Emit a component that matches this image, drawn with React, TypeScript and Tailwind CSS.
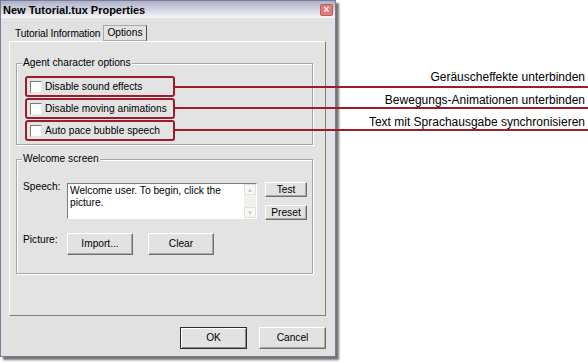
import React from "react";

const btn =
  "flex items-center justify-center bg-[#e2e2e2] border border-t-white border-l-white border-r-[#6f6f6f] border-b-[#6f6f6f] shadow-[inset_-1px_-1px_0_#a8a8a8]";

function Check({ label }: { label: string }) {
  return (
    <div className="flex h-[21px] w-[150px] items-center rounded-[3px] border-2 border-[#9b1c2c] pl-[3px]">
      <span className="h-[12px] w-[12px] border border-t-[#7c7c7c] border-l-[#7c7c7c] border-r-[#e8e8e8] border-b-[#e8e8e8] bg-white" />
      <span className="ml-[3px] leading-[12px]">{label}</span>
    </div>
  );
}

function Group({ title, children, className = "" }: { title: string; children: React.ReactNode; className?: string }) {
  return (
    <div className={`w-[297px] border border-[#a7a7a7] shadow-[inset_1px_1px_0_#fff,1px_1px_0_#fff] ${className}`}>
      <div className="-mt-[7px] ml-[5px] w-fit bg-[#e3e3e3] px-[1px] leading-[12px]">{title}</div>
      {children}
    </div>
  );
}

export default function App() {
  const lines = ["top-[86px]", "top-[107px]", "top-[129px]"];

  return (
    <div className="relative flex h-[363px] w-[588px] overflow-hidden bg-white font-['Liberation_Sans',Arial,sans-serif] text-[10.2px] text-black">
      {/* dialog */}
      <div className="flex h-[357px] w-[336px] shrink-0 flex-col border border-[#7b7d98] bg-[#e1e1e1] shadow-[3px_3px_2px_rgba(0,0,0,0.55)]">
        <div className="flex h-[17px] items-center justify-between bg-linear-to-b from-[#aeb0c8] to-[#f7f7fa] pl-[2px] pr-[2px]">
          <span className="text-[11px] font-bold leading-[12px]">New Tutorial.tux Properties</span>
          <span className="flex h-[12px] w-[13px] items-center justify-center rounded-[2px] border border-[#c05a5a] bg-[#e47a7a] text-[10px] font-bold leading-none text-white">
            ×
          </span>
        </div>

        <div className="flex flex-1 flex-col pl-[8px] pr-[9px]">
          {/* tabs */}
          <div className="flex h-[23px] items-end">
            <div className="ml-[1px] flex h-[14px] w-[93px] items-center whitespace-nowrap pl-[5px] leading-[12px] tracking-[-0.1px]">Tutorial Information</div>
            <div className="flex h-[16px] w-[44px] items-center justify-center border border-[#a9a9a9] border-r-[#4a4a4a] bg-[#e3e3e3] leading-[12px]">
              Options
            </div>
          </div>

          {/* panel */}
          <div className="h-[275px] w-[317px] border border-t-white border-l-white border-r-[#7e7e7e] border-b-[#7e7e7e] bg-[#e3e3e3] pl-[6px] pt-[21px]">
            <Group title="Agent character options" className="pb-[3px]">
              <div className="ml-[8px] mt-[7px] flex flex-col gap-[1px]">
                <Check label="Disable sound effects" />
                <Check label="Disable moving animations" />
                <Check label="Auto pace bubble speech" />
              </div>
            </Group>

            <Group title="Welcome screen" className="mt-[14px] pb-[18px]">
              <div className="mt-[17px] flex pl-[6px]">
                <div className="-mt-[1px] w-[44px] leading-[12px]">Speech:</div>
                <div className="mt-[1px] flex h-[36px] w-[190px] border border-t-[#7c7c7c] border-l-[#7c7c7c] border-r-white border-b-white bg-white">
                  <div className="flex-1 pl-[2px] pt-[1px] leading-[12px]">
                    Welcome user. To begin, click the
                    <br />
                    picture.
                  </div>
                  <div className="flex w-[12px] flex-col bg-[#f1f1ec]">
                    <div className="flex h-[11px] items-center justify-center border border-[#e2e2dc] bg-[#f7f7f3] text-[6px] leading-none text-[#c8c8c0]">▲</div>
                    <div className="flex-1" />
                    <div className="flex h-[11px] items-center justify-center border border-[#e2e2dc] bg-[#f7f7f3] text-[6px] leading-none text-[#c8c8c0]">▼</div>
                  </div>
                </div>
                <div className="ml-[8px] flex flex-col">
                  <div className={`${btn} h-[15px] w-[42px]`}>Test</div>
                  <div className={`${btn} mt-[8px] h-[15px] w-[42px]`}>Preset</div>
                </div>
              </div>

              <div className="mt-[13px] flex pl-[6px]">
                <div className="w-[44px] pt-[1px] leading-[12px]">Picture:</div>
                <div className={`${btn} h-[22px] w-[66px]`}>Import...</div>
                <div className={`${btn} ml-[15px] h-[22px] w-[66px]`}>Clear</div>
              </div>
            </Group>
          </div>

          {/* buttons */}
          <div className="mt-[11px] flex justify-end gap-[12px]">
            <div className="flex h-[22px] w-[67px] items-center justify-center border border-[#2c2c2c] bg-[#e2e2e2] shadow-[inset_1px_1px_0_#fff,inset_-1px_-1px_0_#8a8a8a]">
              OK
            </div>
            <div className={`${btn} h-[22px] w-[67px]`}>Cancel</div>
          </div>
        </div>
      </div>

      {/* annotations */}
      <div className="flex flex-1 flex-col items-end pr-[3px] pt-[70px] text-[12px] leading-[14px]">
        <span>Geräuscheffekte unterbinden</span>
        <span className="mt-[9px]">Bewegungs-Animationen unterbinden</span>
        <span className="mt-[8px]">Text mit Sprachausgabe synchronisieren</span>
      </div>

      {lines.map((t) => (
        <div key={t} className={`absolute left-[175px] right-0 h-[2px] bg-[#9b1c2c] ${t}`} />
      ))}
    </div>
  );
}
